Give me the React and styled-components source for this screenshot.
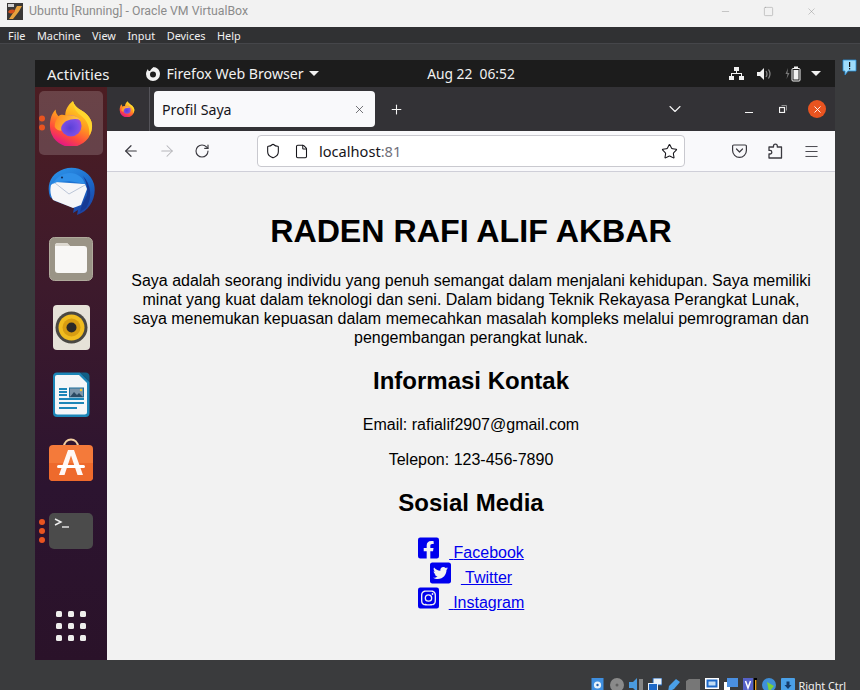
import styled, { createGlobalStyle } from "styled-components";
import { ArrowLeft, ArrowRight, RotateCw, Star, Menu, Shield, File, X, Plus, ChevronDown, Minus, Square } from "lucide-react";
import { FaFacebookSquare, FaTwitterSquare, FaInstagramSquare } from "react-icons/fa";

const GlobalStyle = createGlobalStyle`
  html, body { margin: 0; padding: 0; height: 100%; overflow: hidden; background: #3a3b3d; }
  #root { height: 100%; }
  * { box-sizing: border-box; }
`;

const Page = styled.div`
  width: 860px;
  height: 690px;
  display: flex;
  flex-direction: column;
  overflow: hidden;
  font-family: "Noto Sans", "Open Sans", sans-serif;
`;

const TitleBar = styled.div`
  height: 27px;
  flex: none;
  background: #f2f2f2;
  display: flex;
  align-items: center;
  padding: 0 43px 5px 7px;
  color: #8b8b8b;
  font-family: Roboto, "Noto Sans", sans-serif;
  font-size: 12.3px;
`;

const TitleText = styled.span`
  margin-left: 6px;
  flex: 1;
`;

const WindowControls = styled.div`
  display: flex;
  gap: 32px;
  color: #8f8f8f;
`;

const MenuBar = styled.div`
  height: 17px;
  flex: none;
  background: #303133;
  display: flex;
  align-items: center;
  padding: 1px 0 0 8px;
  gap: 11.5px;
  color: #f0f0f0;
  font-size: 10.9px;
  border-bottom: 1px solid #45464a;
`;

const Stage = styled.div`
  flex: 1;
  position: relative;
  background: #3a3b3d;
  padding: 16px 25px 0 35px;
  min-height: 0;
`;

const Note = styled.div`
  position: absolute;
  top: 14px;
  right: 3px;
`;

const Guest = styled.div`
  width: 800px;
  height: 600px;
  display: flex;
  flex-direction: column;
  background: #1c1c1c;
`;

const TopBar = styled.div`
  height: 27px;
  flex: none;
  display: grid;
  grid-template-columns: 1fr auto 1fr;
  align-items: center;
  background: #1c1c1c;
  color: #f1f1f1;
  font-size: 14.2px;
  padding: 0 14px 0 12px;
`;

const TopLeft = styled.div`
  display: flex;
  align-items: center;
`;

const Activities = styled.span`
  font-size: 15px;
  margin-right: 35px;
`;

const AppName = styled.span`
  margin: 0 5px 0 6px;
`;

const Clock = styled.span`
  font-size: 13.8px;
  white-space: pre;
  margin-left: 74px;
`;

const TopRight = styled.div`
  display: flex;
  align-items: center;
  justify-content: flex-end;
  gap: 13px;
`;

const Caret = styled.span`
  width: 0;
  height: 0;
  border-left: 5px solid transparent;
  border-right: 5px solid transparent;
  border-top: 5px solid #f1f1f1;
  margin-left: ${(p) => (p.$tight ? "-3px" : "0")};
`;

const Desktop = styled.div`
  flex: 1;
  display: flex;
  min-height: 0;
`;

const Dock = styled.div`
  width: 72px;
  flex: none;
  display: flex;
  flex-direction: column;
  align-items: center;
  gap: 4px;
  padding: 4px 0 2px;
  background: linear-gradient(180deg, #4c1d22 0%, #3d1a2c 35%, #2c1430 70%, #2a1229 100%);
`;

const DockSlot = styled.div`
  position: relative;
  width: 64px;
  height: 64px;
  flex: none;
  display: flex;
  align-items: center;
  justify-content: center;
  border-radius: 5px;
  background: ${(p) => (p.$active ? "rgba(255,255,255,0.17)" : "transparent")};
  margin-top: ${(p) => (p.$bottom ? "auto" : "0")};
`;

const RunDots = styled.div`
  position: absolute;
  left: 0;
  top: 50%;
  transform: translate(0, -50%);
  display: flex;
  flex-direction: column;
  gap: 3px;
`;

const RunDot = styled.span`
  width: 6px;
  height: 6px;
  border-radius: 50%;
  background: #e95420;
`;

const AppGrid = styled.div`
  display: grid;
  grid-template-columns: repeat(3, 6px);
  gap: 6px;
`;

const AppDot = styled.span`
  width: 6px;
  height: 6px;
  border-radius: 1.5px;
  background: #eeeeec;
`;

const Browser = styled.div`
  flex: 1;
  display: flex;
  flex-direction: column;
  min-width: 0;
`;

const TabStrip = styled.div`
  height: 44px;
  flex: none;
  background: #333236;
  display: flex;
  align-items: center;
  color: #f5f5f5;
`;

const TabFavicon = styled.div`
  width: 43px;
  height: 44px;
  flex: none;
  display: flex;
  align-items: center;
  justify-content: center;
  padding-right: 3px;
  border-right: 1px solid #55545a;
`;

const Tab = styled.div`
  width: 221px;
  height: 36px;
  margin-left: 4px;
  flex: none;
  background: #f9f9fb;
  border-radius: 4px;
  display: flex;
  align-items: center;
  justify-content: space-between;
  padding: 0 9px 0 8px;
  color: #15141a;
  font-size: 14.2px;
`;

const NewTab = styled.div`
  margin-left: 14px;
  display: flex;
`;

const TabChevron = styled.div`
  margin-left: 261px;
  display: flex;
`;

const WinButtons = styled.div`
  margin-left: 60px;
  display: flex;
  align-items: center;
  gap: 26px;
`;

const MinBar = styled.span`
  width: 8px;
  height: 1px;
  margin-top: 6px;
  background: #f5f5f5;
`;

const CloseDot = styled.div`
  width: 18px;
  height: 18px;
  border-radius: 50%;
  background: #e95420;
  color: #fff;
  display: flex;
  align-items: center;
  justify-content: center;
  margin-left: -5px;
`;

const Toolbar = styled.div`
  height: 41px;
  flex: none;
  background: #f9f9fb;
  border-bottom: 1px solid #cfcfd8;
  display: flex;
  align-items: center;
  color: #3b3a40;
  padding: 0 6px 0 15px;
`;

const NavButtons = styled.div`
  display: flex;
  gap: 18px;
  align-items: center;
  width: 135px;
  flex: none;
`;

const UrlBar = styled.div`
  width: 428px;
  height: 32px;
  flex: none;
  background: #fff;
  border: 1px solid #c9c9cf;
  border-radius: 4px;
  display: flex;
  align-items: center;
  padding: 0 6px 0 7px;
  font-size: 14.6px;
  color: #15141a;
`;

const PageIcon = styled(File)`
  margin-left: 13px;
`;

const UrlText = styled.span`
  flex: 1;
  margin-left: 10px;
`;

const UrlPort = styled.span`
  color: #72717a;
`;

const ToolActions = styled.div`
  margin-left: auto;
  display: flex;
  align-items: center;
`;

const ToolSlot = styled.div`
  width: 36px;
  display: flex;
  justify-content: center;
`;

const Content = styled.main`
  flex: 1;
  background: #f2f2f2;
  padding: 20px;
  color: #000;
  font-family: "Liberation Sans", Arial, sans-serif;
  font-size: 16px;
  line-height: 19px;
  text-align: center;
  min-height: 0;
`;

const Name = styled.h1`
  font-size: 32.2px;
  line-height: 37px;
  font-weight: 700;
  margin: 21px 0;
`;

const Section = styled.h2`
  font-size: 24px;
  line-height: 28px;
  font-weight: 700;
  margin: 20px 0;
`;

const Para = styled.p`
  margin: 16px 0;
`;

const Socials = styled.div`
  display: flex;
  flex-direction: column;
  margin-top: -1px;
`;

const SocialRow = styled.div`
  height: 25px;
`;

const SocialLink = styled.a`
  color: #0000ee;
  text-decoration: underline;
  svg {
    width: 21px;
    height: 24px;
    margin-right: 10px;
    vertical-align: -2px;
  }
`;

const StatusBar = styled.div`
  height: 30px;
  flex: none;
  background: #3a3b3d;
  display: flex;
  align-items: flex-end;
  justify-content: flex-end;
  padding-right: 14px;
  overflow: hidden;
`;

const StatusIcons = styled.div`
  display: flex;
  align-items: flex-start;
  gap: 5px;
  height: 12px;
  margin-right: 4px;
`;

const HostKey = styled.span`
  height: 10px;
  line-height: 12px;
  color: #f0f0f0;
  font-size: 10.8px;
  white-space: nowrap;
`;

function VBoxLogo() {
  return (
    <svg width="16" height="17" viewBox="0 0 16 17">
      <rect width="16" height="17" fill="#3a3836" />
      <path d="M2 16 L6 10 C8 8 8 6 10 3 H15 C13 6 12 9 10 11 L6 16 Z" fill="#e8a33d" />
      <path d="M1 9 C2 6 6 6 8 7 C8 10 4 12 1 9 Z" fill="#d8511c" />
      <rect x="1" y="1" width="6" height="3" fill="#cfcfcf" />
    </svg>
  );
}

function FirefoxIcon({ size }) {
  const id = `ff${size}`;
  return (
    <svg width={size} height={size} viewBox="0 0 48 48">
      <defs>
        <linearGradient id={`${id}b`} x1="0.8" y1="0.05" x2="0.35" y2="1">
          <stop offset="0" stopColor="#ffe226" />
          <stop offset="0.45" stopColor="#ff9a1f" />
          <stop offset="0.75" stopColor="#ff4a3d" />
          <stop offset="1" stopColor="#e31587" />
        </linearGradient>
        <radialGradient id={`${id}g`} cx="0.45" cy="0.6" r="0.65">
          <stop offset="0" stopColor="#5a3fd8" />
          <stop offset="0.6" stopColor="#7a4fe4" />
          <stop offset="1" stopColor="#a94bd8" />
        </radialGradient>
        <linearGradient id={`${id}f`} x1="0" y1="0.2" x2="1" y2="0.5">
          <stop offset="0" stopColor="#ff8a1f" />
          <stop offset="1" stopColor="#ffd04a" />
        </linearGradient>
      </defs>
      <path d="M2 27 C2 20 4 14 8 10 C8 13 9 15 11 17 C13 15 16 15 18 16 C18 10 21 5 26 1 C27 5 30 8 35 11 C42 15 46 21 46 27 A22 22 0 0 1 2 27 Z" fill={`url(#${id}b)`} />
      <path d="M26 1 C27 5 30 8 35 11 C42 15 46 21 46 27 C46 31 45 34 43 37 C44 29 41 21 34 16 C29 12 26 7 26 1 Z" fill="#ffd52e" />
      <circle cx="24" cy="27" r="11" fill={`url(#${id}g)`} />
      <path d="M7 28 C7 20 12 15 18 17 C23 15 30 16 34 21 C29 19 24 20 19 22 C15 25 13 28 14 32 C11 32 8 31 7 28 Z" fill={`url(#${id}f)`} />
    </svg>
  );
}

function ThunderbirdIcon() {
  return (
    <svg width="48" height="48" viewBox="0 0 48 48">
      <defs>
        <linearGradient id="tb" x1="0.3" y1="0" x2="0.8" y2="1">
          <stop offset="0" stopColor="#2a8fe6" />
          <stop offset="0.55" stopColor="#1a62c4" />
          <stop offset="1" stopColor="#1d3f9e" />
        </linearGradient>
      </defs>
      <path d="M3 30 C-1 18 4 6 17 2 C29 -2 43 4 47 17 C50 30 43 44 30 48 L31 43 L26 46 L27 41 L8 34 Z" fill="url(#tb)" />
      <path d="M36 9 C44 17 46 31 39 41 L33 45 L35 38 L40 28 C41 20 39 14 36 9 Z" fill="#163a94" />
      <path d="M4 18 L8 15 L38 17 L40 22 L34 38 L26 41 L6 33 C3 28 3 22 4 18 Z" fill="#f6f6f8" />
      <path d="M8 16 L22 27 L38 18" fill="none" stroke="#b4c0d4" strokeWidth="0.9" />
      <path d="M6 17 C9 10 16 6 23 6 C30 6 36 10 38 17 L22 14 L10 15 Z" fill="#2f8fe8" />
      <circle cx="15" cy="10.5" r="1.1" fill="#14305e" />
    </svg>
  );
}

function FilesIcon() {
  return (
    <svg width="44" height="44" viewBox="0 0 44 44">
      <rect x="0.5" y="0.5" width="43" height="43" rx="5" fill="#9a9486" stroke="#b0aa9c" />
      <path d="M6 9 a3 3 0 0 1 3 -3 H18 L21 9 H35 a3 3 0 0 1 3 3 V33 a3 3 0 0 1 -3 3 H9 a3 3 0 0 1 -3 -3 Z" fill="#f8f7f5" />
      <path d="M6 9 a3 3 0 0 1 3 -3 H18 L21 9 Z" fill="#ddd9d0" />
    </svg>
  );
}

function RhythmboxIcon() {
  return (
    <svg width="37" height="45" viewBox="0 0 37 45">
      <rect width="37" height="45" rx="4" fill="#e6e2d8" />
      <circle cx="18.5" cy="22.5" r="16" fill="#4a4843" />
      <circle cx="18.5" cy="22.5" r="13" fill="#f1bd1f" />
      <circle cx="18.5" cy="22.5" r="9" fill="#d79d12" />
      <circle cx="18.5" cy="22.5" r="5" fill="#2b2a28" />
    </svg>
  );
}

function WriterIcon() {
  return (
    <svg width="37" height="46" viewBox="0 0 37 46">
      <path d="M4 0.5 H27 L36.5 10 V41 a4 4 0 0 1 -4 4 H4 a4 4 0 0 1 -4 -4 V4 a4 4 0 0 1 4 -3.5 Z" fill="#1c86b8" />
      <path d="M4 3 H26 L34 11 V40 a2.5 2.5 0 0 1 -2.5 2.5 H4.5 a2.5 2.5 0 0 1 -2.5 -2.5 V5 a2 2 0 0 1 2 -2 Z" fill="#f4f6f8" />
      <path d="M27 0.5 L36.5 10 V4 a4 4 0 0 0 -4 -3.5 Z" fill="#125f86" />
      <path d="M6 17 H14 M6 20 H14 M6 23 H14 M6 27 H31 M6 31 H31 M6 36 H24" stroke="#1c86b8" strokeWidth="2" />
      <rect x="16.5" y="16" width="14" height="9" fill="#7d96ab" stroke="#1c6f9c" />
      <path d="M17 25 L21 20 L24 23 L26 21 L30 25 Z" fill="#2d4a63" />
      <circle cx="28" cy="18" r="1.2" fill="#f2c230" />
    </svg>
  );
}

function SoftwareIcon() {
  return (
    <svg width="44" height="50" viewBox="0 0 44 50">
      <path d="M15 9 C15 -1 29 -1 29 9" fill="none" stroke="#f3cfa0" strokeWidth="2" />
      <rect x="0" y="7" width="44" height="36" rx="4" fill="#f47a3a" />
      <path d="M0 25 H44 V39 a4 4 0 0 1 -4 4 H4 a4 4 0 0 1 -4 -4 Z" fill="#ee6a2c" />
      <path d="M19 12 H25 L34 37 H28.5 L22 17.5 L15.5 37 H10 Z" fill="#fff" opacity="0.95" />
      <rect x="8" y="27" width="28" height="3" rx="1.5" fill="#fff" />
    </svg>
  );
}

function TerminalIcon() {
  return (
    <svg width="44" height="36" viewBox="0 0 44 36">
      <rect width="44" height="36" rx="5" fill="#4b4b4b" />
      <path d="M6 6 L12 9 L6 12" fill="none" stroke="#eee" strokeWidth="1.4" />
      <path d="M13 14 H20" stroke="#eee" strokeWidth="1.4" />
    </svg>
  );
}

function FoxWhite() {
  return (
    <svg width="16" height="16" viewBox="0 0 16 16">
      <path d="M8 1 C12 1 15 4 15 8 A7 7 0 0 1 1 8 C1 6 2 4 3 3 C3 5 4 5 5 5 C6 3 7 2 9 1 Z" fill="#f1f1f1" />
      <circle cx="8" cy="8.5" r="3" fill="#1c1c1c" />
    </svg>
  );
}

function NetworkIcon() {
  return (
    <svg width="15" height="14" viewBox="0 0 15 14" fill="#f1f1f1">
      <rect x="5" y="0" width="5" height="4" />
      <rect x="0" y="9" width="5" height="4" />
      <rect x="10" y="9" width="5" height="4" />
      <path d="M7 4 H8 V6 H13 V9 H12 V7 H3 V9 H2 V6 H7 Z" />
    </svg>
  );
}

function SpeakerIcon() {
  return (
    <svg width="15" height="14" viewBox="0 0 15 14">
      <path d="M0 5 H3 L7 1 V13 L3 9 H0 Z" fill="#f1f1f1" />
      <path d="M9 4 Q11 7 9 10 M11.5 2.5 Q14.5 7 11.5 11.5" stroke="#8a8a8a" strokeWidth="1.2" fill="none" />
    </svg>
  );
}

function BatteryIcon() {
  return (
    <svg width="16" height="16" viewBox="0 0 16 16">
      <path d="M3 2 L0.5 8 H2.5 L1.5 13 L4.5 7 H2.5 Z" fill="#777" />
      <rect x="7" y="2.5" width="8" height="12.5" rx="1" fill="#1c1c1c" stroke="#f1f1f1" />
      <rect x="9" y="0.5" width="4" height="2" fill="#f1f1f1" />
      <rect x="8.5" y="4" width="5" height="9.5" fill="#f1f1f1" />
    </svg>
  );
}

function PocketIcon() {
  return (
    <svg width="15" height="14" viewBox="0 0 15 14" fill="none" stroke="currentColor" strokeWidth="1.2">
      <path d="M1.8 1 H13.2 a1.2 1.2 0 0 1 1.2 1.2 V6.5 A6.9 6.9 0 0 1 0.6 6.5 V2.2 A1.2 1.2 0 0 1 1.8 1 Z" />
      <path d="M4.5 5 L7.5 8 L10.5 5" strokeLinecap="round" strokeLinejoin="round" />
    </svg>
  );
}

function ExtensionIcon() {
  return (
    <svg width="15" height="16" viewBox="0 0 15 16" fill="none" stroke="currentColor" strokeWidth="1.3" strokeLinejoin="round">
      <path d="M1 15 V11 H2 a1.8 1.8 0 0 0 0 -3.6 H1 V4 H5.5 V3 a1.9 1.9 0 0 1 3.8 0 V4 H13.5 V15 Z" />
    </svg>
  );
}

function RestoreIcon() {
  return (
    <svg width="8" height="8" viewBox="0 0 8 8" fill="none" stroke="#f5f5f5">
      <rect x="0.5" y="2.5" width="5" height="5" strokeWidth="1.2" />
      <path d="M2.5 0.5 H7.5 V5.5" stroke="#aaa" strokeWidth="0.8" />
    </svg>
  );
}

function NoteIcon() {
  return (
    <svg width="15" height="16" viewBox="0 0 15 16">
      <path d="M1 1 H14 V12 H6 L3 16 V12 H1 Z" fill="#9fdcfb" stroke="#2a8fd8" strokeWidth="0.8" />
      <rect x="7" y="3" width="1.2" height="5" fill="#111" />
      <rect x="7" y="9" width="1.2" height="1.4" fill="#111" />
    </svg>
  );
}

function StatusGlyph({ kind }) {
  const shapes = {
    disk: (
      <>
        <rect x="0.5" y="0" width="12" height="14" fill="#3f8fe0" />
        <circle cx="6.5" cy="7" r="3.6" fill="#e8f3fb" />
        <circle cx="6.5" cy="7" r="1.2" fill="#1f5fb0" />
      </>
    ),
    cd: (
      <>
        <circle cx="7" cy="7" r="7" fill="#8a8a8a" />
        <circle cx="7" cy="7" r="1.5" fill="#5f5f5f" />
      </>
    ),
    audio: (
      <>
        <path d="M0 4 H4 L8 0 V14 L4 10 H0 Z" fill="#4a9be0" />
        <path d="M10 1 H14 V14 H10 Z" fill="#858585" />
      </>
    ),
    net: (
      <>
        <rect x="5" y="0" width="9" height="7" fill="#e8f0f8" stroke="#1c5fb0" />
        <rect x="0.5" y="5.5" width="9" height="8" fill="#1c68c8" stroke="#e8f0f8" />
      </>
    ),
    usb: <path d="M1 14 L2 8 L9 1 L13 4 L7 11 Z" fill="#4aa0e8" />,
    folder: <path d="M0 3 L3 1 H14 V14 H0 Z" fill="#777" />,
    screen: (
      <>
        <rect x="0" y="0" width="14" height="11" fill="#fff" />
        <rect x="1.5" y="1.5" width="11" height="8" fill="#1c68c8" />
        <rect x="3.5" y="3.5" width="7" height="4" fill="#bfdcf5" />
      </>
    ),
    rec: (
      <>
        <rect x="0" y="4" width="6" height="10" fill="#fff" />
        <rect x="3" y="0" width="11" height="9" fill="#4a90e2" />
      </>
    ),
    v: (
      <>
        <rect x="0" y="0" width="10" height="14" fill="#5561c8" />
        <path d="M2.5 3 L5 10 L7.5 3" stroke="#fff" strokeWidth="1.5" fill="none" />
        <rect x="11" y="0" width="3" height="14" fill="#000" />
        <rect x="12" y="2" width="1.5" height="11" fill="#e8a020" />
      </>
    ),
    globe: (
      <>
        <circle cx="7" cy="7" r="7" fill="#3f8fd8" />
        <path d="M5 4 L12 8 L7 14 Z" fill="#7bd13a" />
      </>
    ),
    down: (
      <>
        <rect x="0" y="0" width="14" height="14" rx="1" fill="#4aa0e8" />
        <path d="M7 11 L3.5 7 H5.5 V3.5 H8.5 V7 H10.5 Z" fill="#143a6a" />
      </>
    ),
  };
  return (
    <svg width="14" height="14" viewBox="0 0 14 14">
      {shapes[kind]}
    </svg>
  );
}

const dockApps = [
  { key: "ff", node: <FirefoxIcon size={46} />, dots: 2, active: true },
  { key: "tb", node: <ThunderbirdIcon /> },
  { key: "files", node: <FilesIcon /> },
  { key: "rb", node: <RhythmboxIcon /> },
  { key: "wr", node: <WriterIcon /> },
  { key: "sw", node: <SoftwareIcon /> },
  { key: "term", node: <TerminalIcon />, dots: 3 },
];

const socials = [
  { label: "Facebook", icon: <FaFacebookSquare /> },
  { label: "Twitter", icon: <FaTwitterSquare /> },
  { label: "Instagram", icon: <FaInstagramSquare /> },
];

const statusKinds = ["disk", "cd", "audio", "net", "usb", "folder", "screen", "rec", "v", "globe", "down"];

export default function App() {
  return (
    <Page>
      <GlobalStyle />
      <TitleBar>
        <VBoxLogo />
        <TitleText>Ubuntu [Running] - Oracle VM VirtualBox</TitleText>
        <WindowControls>
          <Minus size={11} strokeWidth={1} />
          <Square size={11} strokeWidth={1} />
          <X size={11} strokeWidth={1} />
        </WindowControls>
      </TitleBar>
      <MenuBar>
        {["File", "Machine", "View", "Input", "Devices", "Help"].map((m) => (
          <span key={m}>{m}</span>
        ))}
      </MenuBar>
      <Stage>
        <Note>
          <NoteIcon />
        </Note>
        <Guest>
          <TopBar>
            <TopLeft>
              <Activities>Activities</Activities>
              <FoxWhite />
              <AppName>Firefox Web Browser</AppName>
              <Caret />
            </TopLeft>
            <Clock>{"Aug 22  06:52"}</Clock>
            <TopRight>
              <NetworkIcon />
              <SpeakerIcon />
              <BatteryIcon />
              <Caret $tight />
            </TopRight>
          </TopBar>
          <Desktop>
            <Dock>
              {dockApps.map((app) => (
                <DockSlot key={app.key} $active={app.active}>
                  {app.dots && (
                    <RunDots>
                      {Array.from({ length: app.dots }).map((_, i) => (
                        <RunDot key={i} />
                      ))}
                    </RunDots>
                  )}
                  {app.node}
                </DockSlot>
              ))}
              <DockSlot $bottom>
                <AppGrid>
                  {Array.from({ length: 9 }).map((_, i) => (
                    <AppDot key={i} />
                  ))}
                </AppGrid>
              </DockSlot>
            </Dock>
            <Browser>
              <TabStrip>
                <TabFavicon>
                  <FirefoxIcon size={16} />
                </TabFavicon>
                <Tab>
                  Profil Saya
                  <X size={13} strokeWidth={1.3} color="#3b3a40" />
                </Tab>
                <NewTab>
                  <Plus size={15} strokeWidth={1.7} />
                </NewTab>
                <TabChevron>
                  <ChevronDown size={20} strokeWidth={1.3} />
                </TabChevron>
                <WinButtons>
                  <MinBar />
                  <RestoreIcon />
                  <CloseDot>
                    <X size={11} strokeWidth={2} />
                  </CloseDot>
                </WinButtons>
              </TabStrip>
              <Toolbar>
                <NavButtons>
                  <ArrowLeft size={18} strokeWidth={1.6} />
                  <ArrowRight size={18} strokeWidth={1.4} color="#b5b5b9" />
                  <RotateCw size={16} strokeWidth={1.7} />
                </NavButtons>
                <UrlBar>
                  <Shield size={16} strokeWidth={1.6} />
                  <PageIcon size={15} strokeWidth={1.7} />
                  <UrlText>
                    localhost<UrlPort>:81</UrlPort>
                  </UrlText>
                  <Star size={17} strokeWidth={1.5} />
                </UrlBar>
                <ToolActions>
                  <ToolSlot>
                    <PocketIcon />
                  </ToolSlot>
                  <ToolSlot>
                    <ExtensionIcon />
                  </ToolSlot>
                  <ToolSlot>
                    <Menu size={17} strokeWidth={1.3} />
                  </ToolSlot>
                </ToolActions>
              </Toolbar>
              <Content>
                <Name>RADEN RAFI ALIF AKBAR</Name>
                <Para>
                  Saya adalah seorang individu yang penuh semangat dalam menjalani kehidupan. Saya memiliki minat yang kuat dalam teknologi dan seni. Dalam bidang Teknik Rekayasa Perangkat Lunak, saya menemukan kepuasan dalam memecahkan masalah kompleks melalui pemrograman dan pengembangan perangkat lunak.
                </Para>
                <Section>Informasi Kontak</Section>
                <Para>Email: rafialif2907@gmail.com</Para>
                <Para>Telepon: 123-456-7890</Para>
                <Section>Sosial Media</Section>
                <Socials>
                  {socials.map((s) => (
                    <SocialRow key={s.label}>
                      <SocialLink href="#">
                        {s.icon} {s.label}
                      </SocialLink>
                    </SocialRow>
                  ))}
                </Socials>
              </Content>
            </Browser>
          </Desktop>
        </Guest>
      </Stage>
      <StatusBar>
        <StatusIcons>
          {statusKinds.map((k) => (
            <StatusGlyph key={k} kind={k} />
          ))}
        </StatusIcons>
        <HostKey>Right Ctrl</HostKey>
      </StatusBar>
    </Page>
  );
}
